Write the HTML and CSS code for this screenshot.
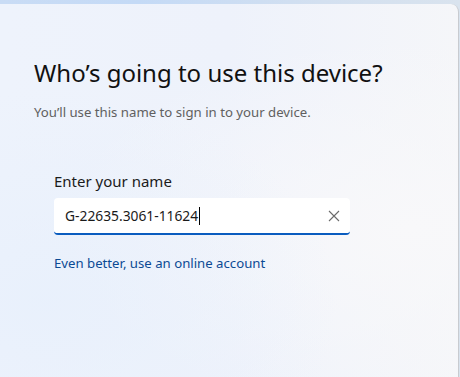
FILE: index.html
```html
<!DOCTYPE html>
<html>
<head>
<meta charset="utf-8">
<link rel="stylesheet" href="styles.css">
</head>
<body>
<div class="panel">
  <h1 class="title">Who’s going to use this device?</h1>
  <p class="subtitle">You’ll use this name to sign in to your device.</p>
  <div class="field">
    <label class="label">Enter your name</label>
    <div class="input">
      <span class="value">G-22635.3061-11624</span><span class="caret"></span>
      <svg class="clear" width="12" height="12" viewBox="0 0 12 12"><path d="M1 1L11 11M11 1L1 11" stroke="#6b6b6b" stroke-width="1.1" fill="none"/></svg>
    </div>
    <a class="link">Even better, use an online account</a>
  </div>
</div>
</body>
</html>
```
FILE: styles.css
```css
html, body { margin: 0; height: 100%; }
body {
  background: linear-gradient(90deg, #c9dcf5 0%, #c4daf6 30%, #d3e0f0 70%, #d9e3ee 100%);
  font-family: "Noto Sans", "Open Sans", sans-serif;
  overflow: hidden;
}
.panel {
  box-sizing: border-box;
  margin-top: 4px;
  width: 459px;
  height: 373px;
  border-top-right-radius: 8px;
  border-right: 1px solid #c8cbd0;
  background:
    radial-gradient(ellipse at 10% 80%, rgba(232,240,252,0.9) 0%, rgba(232,240,252,0) 50%),
    radial-gradient(ellipse at 90% 60%, rgba(248,248,250,1) 0%, rgba(248,248,250,0) 60%),
    linear-gradient(90deg, #eef3fc 0%, #eef2fb 50%, #f5f6f9 100%);
  padding: 53px 0 0 34px;
}
.title {
  margin: 0;
  font-size: 24px;
  font-weight: 400;
  line-height: 32px;
  color: #111;
}
.subtitle {
  margin: 14px 0 0;
  font-size: 13.2px;
  line-height: 18px;
  color: #606060;
}
.field {
  margin: 50px 0 0 20px;
  display: flex;
  flex-direction: column;
}
.label {
  font-size: 15px;
  line-height: 20px;
  color: #1b1b1b;
}
.input {
  box-sizing: border-box;
  margin-top: 7px;
  width: 296px;
  height: 37px;
  background: #fff;
  border-radius: 4px;
  border-bottom: 2px solid #0a5cbf;
  display: flex;
  align-items: center;
  padding: 0 10px 0 11px;
}
.value {
  font-size: 13.8px;
  color: #1a1a1a;
}
.caret {
  width: 1px;
  height: 18px;
  background: #000;
  margin-left: 1px;
}
.clear { margin-left: auto; margin-right: 0; }
.link {
  margin-top: 19px;
  font-size: 13.2px;
  line-height: 18px;
  color: #0b4a94;
}
```
